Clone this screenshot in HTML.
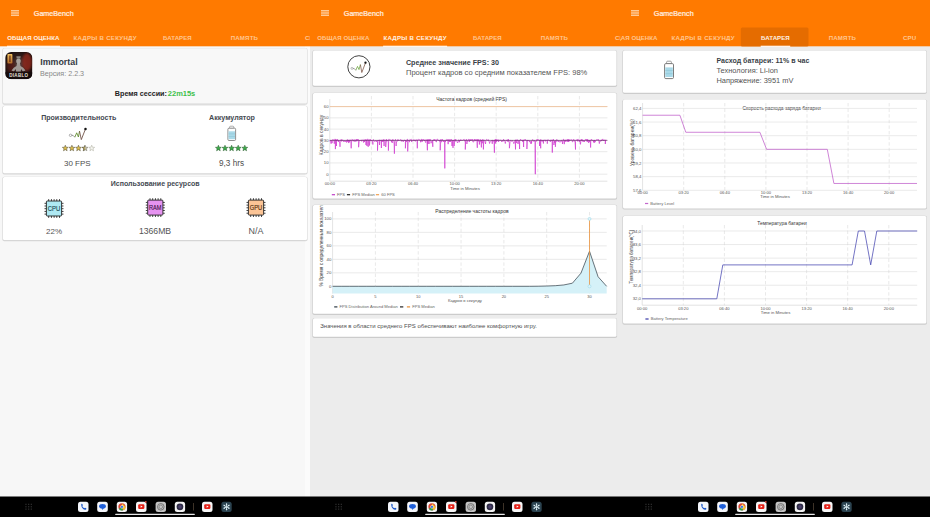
<!DOCTYPE html><html><head><meta charset="utf-8"><style>html,body{margin:0;padding:0;background:#ededed;overflow:hidden}</style></head><body><svg width="930" height="517" viewBox="0 0 930 517" font-family='"Liberation Sans", sans-serif' style="display:block">
<defs><filter id="sh" x="-5%" y="-20%" width="110%" height="140%"><feGaussianBlur stdDeviation="0.6"/></filter>
<clipPath id="clip0"><rect x="0" y="0" width="310" height="517"/></clipPath>
<clipPath id="clip310"><rect x="310" y="0" width="310" height="517"/></clipPath>
<clipPath id="clip620"><rect x="620" y="0" width="310" height="517"/></clipPath>
</defs>
<rect width="930" height="517" fill="#ececec"/>
<rect x="0" y="0" width="310" height="517" fill="#f7f7f7"/>
<rect x="305" y="46" width="5" height="451" fill="#fbfbfb"/>
<g clip-path="url(#clip0)">
<rect x="0" y="0" width="310" height="46.3" fill="#ff7a00"/>
<rect x="11" y="10.2" width="8" height="1.2" fill="#ffdcb8"/>
<rect x="11" y="12.4" width="8" height="1.2" fill="#ffdcb8"/>
<rect x="11" y="14.6" width="8" height="1.2" fill="#ffdcb8"/>
<text x="33.8" y="16.2" font-size="7.5" fill="#fff0e2" stroke="#fff0e2" stroke-width="0.22" textLength="39.9" lengthAdjust="spacingAndGlyphs">GameBench</text>
<text x="7.30" y="39.7" font-size="6.1" fill="#fff2e4" font-weight="bold" textLength="52.2" lengthAdjust="spacing">ОБЩАЯ ОЦЕНКА</text>
<rect x="7.0" y="45.7" width="53.0" height="1.3" fill="#fff5ec"/>
<text x="73.40" y="39.7" font-size="6.1" fill="#ffc690" font-weight="bold" textLength="63.2" lengthAdjust="spacing">КАДРЫ В СЕКУНДУ</text>
<text x="163.00" y="39.7" font-size="6.1" fill="#ffc690" font-weight="bold" textLength="28.7" lengthAdjust="spacing">БАТАРЕЯ</text>
<text x="230.70" y="39.7" font-size="6.1" fill="#ffc690" font-weight="bold" textLength="27.3" lengthAdjust="spacing">ПАМЯТЬ</text>
<text x="305.10" y="39.7" font-size="6.1" fill="#ffc690" font-weight="bold" textLength="13" lengthAdjust="spacing">CPU</text>
</g>
<rect x="2.4" y="48.099999999999994" width="305.2" height="56.6" rx="1.8" fill="#000" opacity="0.13" filter="url(#sh)"/>
<rect x="3" y="48.3" width="304" height="55.2" rx="1.5" fill="#f8f8f8"/>
<defs><radialGradient id="dg" cx="0.5" cy="0.45" r="0.65"><stop offset="0" stop-color="#5a4440"/><stop offset="0.5" stop-color="#2e1a18"/><stop offset="1" stop-color="#120a0a"/></radialGradient><linearGradient id="gb" x1="0" y1="0" x2="0" y2="1"><stop offset="0" stop-color="#f0c060"/><stop offset="1" stop-color="#b06a28"/></linearGradient><filter id="bl"><feGaussianBlur stdDeviation="1.2"/></filter></defs>
<clipPath id="dclip"><rect x="5.2" y="52" width="27.2" height="27.2" rx="6"/></clipPath>
<g clip-path="url(#dclip)">
<rect x="5.2" y="52" width="27.2" height="27.2" fill="url(#dg)"/>
<ellipse cx="27" cy="62" rx="5" ry="9" fill="#9a2a1e" opacity="0.75" filter="url(#bl)"/>
<ellipse cx="11" cy="66" rx="4" ry="6" fill="#5a1e18" opacity="0.7" filter="url(#bl)"/>
<rect x="7.4" y="54" width="5" height="9.5" rx="0.8" fill="url(#gb)"/>
<rect x="9.4" y="55.5" width="1.1" height="6.5" fill="#5a2010"/>
<path d="M16.3 56.2 h4.4 l-0.4 2.2 h-3.6z" fill="#8d8680"/>
<ellipse cx="18.5" cy="61" rx="2.3" ry="2.6" fill="#a8a29c"/>
<path d="M11.5 70.5 q2 -3.5 5 -4.5 l0.6 -3 h2.8 l0.6 3 q3 1 5 4.5 q-2 1.2 -3 0.6 l-1.4 -2 l-0.4 2.4 h-4.6 l-0.4 -2.4 l-1.4 2 q-1 0.6 -2.8 -0.6z" fill="#aaa49e" opacity="0.9"/>
<rect x="5.2" y="72" width="27.2" height="7.2" fill="#120a0a" opacity="0.6"/>
</g>
<text x="18.80" y="77.10" font-size="4.5" fill="#e6e0da" font-weight="bold" text-anchor="middle" letter-spacing="0.3">DIABLO</text>
<text x="40.3" y="64.8" font-size="9.4" fill="#353b45" font-weight="bold" textLength="37.3" lengthAdjust="spacingAndGlyphs">Immortal</text>
<text x="40.1" y="75.8" font-size="7.5" fill="#888" textLength="44" lengthAdjust="spacingAndGlyphs">Версия: 2.2.3</text>
<text x="114.80" y="95.70" font-size="7.19" fill="#1f1f1f" font-weight="bold" text-anchor="start" >Время сессии: </text>
<text x="167.8" y="95.8" font-size="7.5" fill="#3cc04a" font-weight="bold" textLength="27.5" lengthAdjust="spacingAndGlyphs">22m15s</text>
<rect x="2.4" y="105.8" width="305.2" height="68.70000000000002" rx="1.8" fill="#000" opacity="0.13" filter="url(#sh)"/>
<rect x="3" y="106" width="304" height="67.30000000000001" rx="1.5" fill="#fff"/>
<text x="78.70" y="119.90" font-size="7.05" fill="#454a52" font-weight="bold" text-anchor="middle" >Производительность</text>
<circle cx="70.5" cy="135.3" r="1.2" fill="#fff" stroke="#888" stroke-width="0.65"/>
<path d="M71.7 135.3 L73.1 135.4 L74.8 137.2" fill="none" stroke="#7a7a7a" stroke-width="0.8"/>
<path d="M74.8 137.2 L76.7 132.8 L78.4 137 L79.5 131.1" fill="none" stroke="#5f8a2a" stroke-width="0.85"/>
<path d="M79.5 131.1 L81.3 139.6 L85.5 128.9" fill="none" stroke="#6b4c40" stroke-width="0.85"/>
<circle cx="85.5" cy="128.9" r="1.25" fill="#111"/>
<polygon points="65.30,145.20 66.09,147.21 68.25,147.34 66.58,148.72 67.12,150.81 65.30,149.65 63.48,150.81 64.02,148.72 62.35,147.34 64.51,147.21" fill="#dcbd4a" stroke="#4f4a36" stroke-width="0.5"/>
<polygon points="71.90,145.20 72.69,147.21 74.85,147.34 73.18,148.72 73.72,150.81 71.90,149.65 70.08,150.81 70.62,148.72 68.95,147.34 71.11,147.21" fill="#dcbd4a" stroke="#4f4a36" stroke-width="0.5"/>
<polygon points="78.50,145.20 79.29,147.21 81.45,147.34 79.78,148.72 80.32,150.81 78.50,149.65 76.68,150.81 77.22,148.72 75.55,147.34 77.71,147.21" fill="#dcbd4a" stroke="#4f4a36" stroke-width="0.5"/>
<clipPath id="hc62"><rect x="81.89999999999999" y="144.8" width="3.2" height="7"/></clipPath>
<polygon points="85.10,145.20 85.89,147.21 88.05,147.34 86.38,148.72 86.92,150.81 85.10,149.65 83.28,150.81 83.82,148.72 82.15,147.34 84.31,147.21" fill="#c4c0a8" stroke="#77766a" stroke-width="0.5"/>
<polygon points="85.10,145.20 85.89,147.21 88.05,147.34 86.38,148.72 86.92,150.81 85.10,149.65 83.28,150.81 83.82,148.72 82.15,147.34 84.31,147.21" fill="#bfae68" stroke="#4f4a36" stroke-width="0.5" clip-path="url(#hc62)"/>
<polygon points="91.70,145.20 92.49,147.21 94.65,147.34 92.98,148.72 93.52,150.81 91.70,149.65 89.88,150.81 90.42,148.72 88.75,147.34 90.91,147.21" fill="#f4f4ee" stroke="#a9a89a" stroke-width="0.5"/>
<text x="77.30" y="165.60" font-size="8.0" fill="#4e4e4e" font-weight="normal" text-anchor="middle" >30 FPS</text>
<text x="232.00" y="119.90" font-size="7.13" fill="#454a52" font-weight="bold" text-anchor="middle" >Аккумулятор</text>
<rect x="229.6" y="126.2" width="4.2" height="2.3" rx="0.9" fill="#fff" stroke="#7a7a7a" stroke-width="0.6"/>
<rect x="227.9" y="128.2" width="7.7" height="12.3" rx="1.1" fill="#fff" stroke="#747474" stroke-width="0.8"/>
<rect x="228.5" y="131.3" width="6.5" height="7.9" fill="#a9d9e8"/>
<rect x="228.5" y="133.7" width="6.5" height="0.45" fill="#86c0d2"/><rect x="228.5" y="136.4" width="6.5" height="0.45" fill="#86c0d2"/>
<polygon points="218.40,145.20 219.19,147.21 221.35,147.34 219.68,148.72 220.22,150.81 218.40,149.65 216.58,150.81 217.12,148.72 215.45,147.34 217.61,147.21" fill="#3bab48" stroke="#2c5a31" stroke-width="0.5"/>
<polygon points="225.00,145.20 225.79,147.21 227.95,147.34 226.28,148.72 226.82,150.81 225.00,149.65 223.18,150.81 223.72,148.72 222.05,147.34 224.21,147.21" fill="#3bab48" stroke="#2c5a31" stroke-width="0.5"/>
<polygon points="231.60,145.20 232.39,147.21 234.55,147.34 232.88,148.72 233.42,150.81 231.60,149.65 229.78,150.81 230.32,148.72 228.65,147.34 230.81,147.21" fill="#3bab48" stroke="#2c5a31" stroke-width="0.5"/>
<polygon points="238.20,145.20 238.99,147.21 241.15,147.34 239.48,148.72 240.02,150.81 238.20,149.65 236.38,150.81 236.92,148.72 235.25,147.34 237.41,147.21" fill="#3bab48" stroke="#2c5a31" stroke-width="0.5"/>
<polygon points="244.80,145.20 245.59,147.21 247.75,147.34 246.08,148.72 246.62,150.81 244.80,149.65 242.98,150.81 243.52,148.72 241.85,147.34 244.01,147.21" fill="#3bab48" stroke="#2c5a31" stroke-width="0.5"/>
<text x="231.50" y="165.60" font-size="8.18" fill="#4e4e4e" font-weight="normal" text-anchor="middle" >9,3 hrs</text>
<rect x="2.4" y="176.8" width="305.2" height="64.4" rx="1.8" fill="#000" opacity="0.13" filter="url(#sh)"/>
<rect x="3" y="177" width="304" height="63" rx="1.5" fill="#fff"/>
<text x="155.20" y="185.70" font-size="7.04" fill="#454a52" font-weight="bold" text-anchor="middle" >Использование ресурсов</text>
<rect x="48.24999999999999" y="199.1" width="0.9" height="1.9" fill="#333"/>
<rect x="48.24999999999999" y="216.0" width="0.9" height="1.9" fill="#333"/>
<rect x="44.5" y="202.85000000000002" width="1.9" height="0.9" fill="#333"/>
<rect x="61.599999999999994" y="202.85000000000002" width="1.9" height="0.9" fill="#333"/>
<rect x="50.949999999999996" y="199.1" width="0.9" height="1.9" fill="#333"/>
<rect x="50.949999999999996" y="216.0" width="0.9" height="1.9" fill="#333"/>
<rect x="44.5" y="205.55" width="1.9" height="0.9" fill="#333"/>
<rect x="61.599999999999994" y="205.55" width="1.9" height="0.9" fill="#333"/>
<rect x="53.65" y="199.1" width="0.9" height="1.9" fill="#333"/>
<rect x="53.65" y="216.0" width="0.9" height="1.9" fill="#333"/>
<rect x="44.5" y="208.25" width="1.9" height="0.9" fill="#333"/>
<rect x="61.599999999999994" y="208.25" width="1.9" height="0.9" fill="#333"/>
<rect x="56.349999999999994" y="199.1" width="0.9" height="1.9" fill="#333"/>
<rect x="56.349999999999994" y="216.0" width="0.9" height="1.9" fill="#333"/>
<rect x="44.5" y="210.95000000000002" width="1.9" height="0.9" fill="#333"/>
<rect x="61.599999999999994" y="210.95000000000002" width="1.9" height="0.9" fill="#333"/>
<rect x="59.05" y="199.1" width="0.9" height="1.9" fill="#333"/>
<rect x="59.05" y="216.0" width="0.9" height="1.9" fill="#333"/>
<rect x="44.5" y="213.65" width="1.9" height="0.9" fill="#333"/>
<rect x="61.599999999999994" y="213.65" width="1.9" height="0.9" fill="#333"/>
<rect x="46.4" y="201.0" width="15.2" height="15" rx="0.8" fill="#aee9f3" stroke="#222" stroke-width="0.9"/>
<text x="54.00" y="211.00" font-size="6.9" fill="#14434a" stroke="#14434a" stroke-width="0.12" text-anchor="middle" textLength="12.4" lengthAdjust="spacingAndGlyphs">CPU</text>
<rect x="149.55000000000004" y="198.2" width="0.9" height="1.9" fill="#333"/>
<rect x="149.55000000000004" y="215.1" width="0.9" height="1.9" fill="#333"/>
<rect x="145.8" y="201.95000000000002" width="1.9" height="0.9" fill="#333"/>
<rect x="162.9" y="201.95000000000002" width="1.9" height="0.9" fill="#333"/>
<rect x="152.25000000000003" y="198.2" width="0.9" height="1.9" fill="#333"/>
<rect x="152.25000000000003" y="215.1" width="0.9" height="1.9" fill="#333"/>
<rect x="145.8" y="204.65" width="1.9" height="0.9" fill="#333"/>
<rect x="162.9" y="204.65" width="1.9" height="0.9" fill="#333"/>
<rect x="154.95000000000002" y="198.2" width="0.9" height="1.9" fill="#333"/>
<rect x="154.95000000000002" y="215.1" width="0.9" height="1.9" fill="#333"/>
<rect x="145.8" y="207.35" width="1.9" height="0.9" fill="#333"/>
<rect x="162.9" y="207.35" width="1.9" height="0.9" fill="#333"/>
<rect x="157.65000000000003" y="198.2" width="0.9" height="1.9" fill="#333"/>
<rect x="157.65000000000003" y="215.1" width="0.9" height="1.9" fill="#333"/>
<rect x="145.8" y="210.05" width="1.9" height="0.9" fill="#333"/>
<rect x="162.9" y="210.05" width="1.9" height="0.9" fill="#333"/>
<rect x="160.35000000000002" y="198.2" width="0.9" height="1.9" fill="#333"/>
<rect x="160.35000000000002" y="215.1" width="0.9" height="1.9" fill="#333"/>
<rect x="145.8" y="212.75" width="1.9" height="0.9" fill="#333"/>
<rect x="162.9" y="212.75" width="1.9" height="0.9" fill="#333"/>
<rect x="147.70000000000002" y="200.1" width="15.2" height="15" rx="0.8" fill="#e693f0" stroke="#222" stroke-width="0.9"/>
<text x="155.30" y="210.10" font-size="6.9" fill="#3a1040" stroke="#3a1040" stroke-width="0.12" text-anchor="middle" textLength="12.4" lengthAdjust="spacingAndGlyphs">RAM</text>
<rect x="250.25000000000003" y="198.2" width="0.9" height="1.9" fill="#333"/>
<rect x="250.25000000000003" y="215.1" width="0.9" height="1.9" fill="#333"/>
<rect x="246.5" y="201.95000000000002" width="1.9" height="0.9" fill="#333"/>
<rect x="263.6" y="201.95000000000002" width="1.9" height="0.9" fill="#333"/>
<rect x="252.95000000000002" y="198.2" width="0.9" height="1.9" fill="#333"/>
<rect x="252.95000000000002" y="215.1" width="0.9" height="1.9" fill="#333"/>
<rect x="246.5" y="204.65" width="1.9" height="0.9" fill="#333"/>
<rect x="263.6" y="204.65" width="1.9" height="0.9" fill="#333"/>
<rect x="255.65000000000003" y="198.2" width="0.9" height="1.9" fill="#333"/>
<rect x="255.65000000000003" y="215.1" width="0.9" height="1.9" fill="#333"/>
<rect x="246.5" y="207.35" width="1.9" height="0.9" fill="#333"/>
<rect x="263.6" y="207.35" width="1.9" height="0.9" fill="#333"/>
<rect x="258.35" y="198.2" width="0.9" height="1.9" fill="#333"/>
<rect x="258.35" y="215.1" width="0.9" height="1.9" fill="#333"/>
<rect x="246.5" y="210.05" width="1.9" height="0.9" fill="#333"/>
<rect x="263.6" y="210.05" width="1.9" height="0.9" fill="#333"/>
<rect x="261.05" y="198.2" width="0.9" height="1.9" fill="#333"/>
<rect x="261.05" y="215.1" width="0.9" height="1.9" fill="#333"/>
<rect x="246.5" y="212.75" width="1.9" height="0.9" fill="#333"/>
<rect x="263.6" y="212.75" width="1.9" height="0.9" fill="#333"/>
<rect x="248.4" y="200.1" width="15.2" height="15" rx="0.8" fill="#fbc496" stroke="#222" stroke-width="0.9"/>
<text x="256.00" y="210.10" font-size="6.9" fill="#4a2808" stroke="#4a2808" stroke-width="0.12" text-anchor="middle" textLength="12.4" lengthAdjust="spacingAndGlyphs">GPU</text>
<text x="54.00" y="233.80" font-size="8.0" fill="#555" font-weight="normal" text-anchor="middle" >22%</text>
<text x="155.00" y="233.60" font-size="8.67" fill="#555" font-weight="normal" text-anchor="middle" >1366MB</text>
<text x="256.00" y="233.60" font-size="8.94" fill="#555" font-weight="normal" text-anchor="middle" >N/A</text>
<rect x="0" y="496.5" width="310" height="20.5" fill="#000"/>
<rect x="25.3" y="503.7" width="1.3" height="1.3" fill="#2a2a2a"/>
<rect x="28.0" y="503.7" width="1.3" height="1.3" fill="#2a2a2a"/>
<rect x="30.700000000000003" y="503.7" width="1.3" height="1.3" fill="#2a2a2a"/>
<rect x="25.3" y="506.09999999999997" width="1.3" height="1.3" fill="#2a2a2a"/>
<rect x="28.0" y="506.09999999999997" width="1.3" height="1.3" fill="#2a2a2a"/>
<rect x="30.700000000000003" y="506.09999999999997" width="1.3" height="1.3" fill="#2a2a2a"/>
<rect x="25.3" y="508.5" width="1.3" height="1.3" fill="#2a2a2a"/>
<rect x="28.0" y="508.5" width="1.3" height="1.3" fill="#2a2a2a"/>
<rect x="30.700000000000003" y="508.5" width="1.3" height="1.3" fill="#2a2a2a"/>
<rect x="78" y="501.7" width="10.5" height="10.3" rx="2.5" fill="#f4f6fb"/>
<path d="M81.3 504 q0.8 -0.6 1.2 0.3 l0.3 1 q0 0.6 -0.6 0.8 q0.6 1.6 2 2.2 q0.3 -0.6 0.9 -0.5 l1 0.4 q0.6 0.5 0 1.2 q-1.2 1 -3 -0.3 q-2.2 -1.8 -1.8 -5.1z" fill="#1a56c8"/>
<rect x="97.2" y="501.7" width="10.6" height="10.3" rx="2.5" fill="#f4f6fb"/>
<ellipse cx="102.5" cy="506.3" rx="3.4" ry="2.4" fill="#1f5fd8"/>
<path d="M101.8 508.2 l0.8 1.8 l1.2 -2z" fill="#1f5fd8"/>
<rect x="116.8" y="501.7" width="10.3" height="10.3" rx="2.5" fill="#f4f4f4"/>
<circle cx="121.95" cy="506.85" r="3.6" fill="#dd4433"/>
<path d="M121.95 506.85 L118.85000000000001 508.65000000000003 A3.6 3.6 0 0 0 123.15 510.25z" fill="#2ea353"/>
<path d="M121.95 506.85 L123.15 510.25 A3.6 3.6 0 0 0 125.55 506.65000000000003 L121.95 503.25z" fill="#f5c12e"/>
<circle cx="121.95" cy="506.85" r="1.6" fill="#fff"/><circle cx="121.95" cy="506.85" r="1.2" fill="#3b78e7"/>
<rect x="136" y="501.7" width="10.5" height="10.3" rx="2.5" fill="#f6f6f6"/>
<rect x="138.2" y="504.3" width="6.2" height="4.6" rx="1.2" fill="#e62117"/>
<path d="M140.6 505.5 l2 1.1 l-2 1.1z" fill="#fff"/>
<circle cx="145.8" cy="501.9" r="0.9" fill="#e94a3f"/>
<rect x="155.6" y="501.7" width="10.4" height="10.3" rx="2.5" fill="#c4c4c4"/>
<circle cx="160.79999999999998" cy="506.85" r="3.3" fill="none" stroke="#555" stroke-width="0.7"/>
<circle cx="160.79999999999998" cy="506.85" r="1.8" fill="none" stroke="#666" stroke-width="0.6"/>
<rect x="174.8" y="501.7" width="10.3" height="10.3" rx="2.5" fill="#f2f2f2"/>
<circle cx="179.95000000000002" cy="506.85" r="3.4" fill="#2c2a44"/>
<circle cx="179.95000000000002" cy="506.85" r="1.8" fill="#4a3f6a"/>
<rect x="202" y="501.7" width="10.5" height="10.3" rx="2.5" fill="#f6f6f6"/>
<rect x="204.2" y="504.3" width="6.2" height="4.6" rx="1.2" fill="#e62117"/>
<path d="M206.6 505.5 l2 1.1 l-2 1.1z" fill="#fff"/>
<rect x="221.4" y="501.7" width="10.3" height="10.3" rx="2.5" fill="#2b4350"/>
<line x1="226.55" y1="506.85" x2="229.49" y2="508.55" stroke="#dff0f6" stroke-width="0.85"/>
<circle cx="228.76" cy="508.12" r="0.75" fill="#dff0f6"/>
<line x1="226.55" y1="506.85" x2="226.55" y2="510.25" stroke="#dff0f6" stroke-width="0.85"/>
<circle cx="226.55" cy="509.40" r="0.75" fill="#dff0f6"/>
<line x1="226.55" y1="506.85" x2="223.61" y2="508.55" stroke="#dff0f6" stroke-width="0.85"/>
<circle cx="224.34" cy="508.12" r="0.75" fill="#dff0f6"/>
<line x1="226.55" y1="506.85" x2="223.61" y2="505.15" stroke="#dff0f6" stroke-width="0.85"/>
<circle cx="224.34" cy="505.58" r="0.75" fill="#dff0f6"/>
<line x1="226.55" y1="506.85" x2="226.55" y2="503.45" stroke="#dff0f6" stroke-width="0.85"/>
<circle cx="226.55" cy="504.30" r="0.75" fill="#dff0f6"/>
<line x1="226.55" y1="506.85" x2="229.49" y2="505.15" stroke="#dff0f6" stroke-width="0.85"/>
<circle cx="228.76" cy="505.58" r="0.75" fill="#dff0f6"/>
<rect x="193" y="503" width="0.7" height="7.5" fill="#5a4a3a"/>
<rect x="115.2" y="513.8" width="79.6" height="1.1" rx="0.5" fill="#e8e8e8"/>
<g clip-path="url(#clip310)">
<rect x="310" y="0" width="310" height="46.3" fill="#ff7a00"/>
<rect x="321" y="10.2" width="8" height="1.2" fill="#ffdcb8"/>
<rect x="321" y="12.4" width="8" height="1.2" fill="#ffdcb8"/>
<rect x="321" y="14.6" width="8" height="1.2" fill="#ffdcb8"/>
<text x="343.8" y="16.2" font-size="7.5" fill="#fff0e2" stroke="#fff0e2" stroke-width="0.22" textLength="39.9" lengthAdjust="spacingAndGlyphs">GameBench</text>
<text x="317.30" y="39.7" font-size="6.1" fill="#ffc690" font-weight="bold" textLength="52.2" lengthAdjust="spacing">ОБЩАЯ ОЦЕНКА</text>
<text x="383.40" y="39.7" font-size="6.1" fill="#fff2e4" font-weight="bold" textLength="63.2" lengthAdjust="spacing">КАДРЫ В СЕКУНДУ</text>
<rect x="383.09999999999997" y="45.7" width="64.0" height="1.3" fill="#fff5ec"/>
<text x="473.00" y="39.7" font-size="6.1" fill="#ffc690" font-weight="bold" textLength="28.7" lengthAdjust="spacing">БАТАРЕЯ</text>
<text x="540.70" y="39.7" font-size="6.1" fill="#ffc690" font-weight="bold" textLength="27.3" lengthAdjust="spacing">ПАМЯТЬ</text>
<text x="615.10" y="39.7" font-size="6.1" fill="#ffc690" font-weight="bold" textLength="13" lengthAdjust="spacing">CPU</text>
</g>
<rect x="312.4" y="50.3" width="304.7" height="36.699999999999996" rx="1.8" fill="#000" opacity="0.13" filter="url(#sh)"/>
<rect x="313" y="50.5" width="303.5" height="35.3" rx="1.5" fill="#fff"/>
<circle cx="358.9" cy="66.8" r="11.1" fill="#fff" stroke="#2e2e2e" stroke-width="0.9"/>
<circle cx="352" cy="68.4" r="1" fill="#fff" stroke="#888" stroke-width="0.55"/>
<path d="M353 68.5 L354.3 68.6 L355.8 70.3" fill="none" stroke="#7a7a7a" stroke-width="0.7"/>
<path d="M355.8 70.3 L357.5 66.4 L359 69.6 L360.4 64.6" fill="none" stroke="#6aa23a" stroke-width="0.75"/>
<path d="M360.4 64.6 L361.8 72.5 L365.5 62.8" fill="none" stroke="#7a5040" stroke-width="0.75"/>
<circle cx="365.5" cy="62.7" r="1.15" fill="#111"/>
<text x="405.90" y="65.00" font-size="7.16" fill="#3a3f47" font-weight="bold" text-anchor="start" >Среднее значение FPS: 30</text>
<text x="406.00" y="75.10" font-size="7.55" fill="#555" font-weight="normal" text-anchor="start" >Процент кадров со средним показателем FPS: 98%</text>
<rect x="312.4" y="92.8" width="304.7" height="106.9" rx="1.8" fill="#000" opacity="0.13" filter="url(#sh)"/>
<rect x="313" y="93" width="303.5" height="105.5" rx="1.5" fill="#fff"/>
<text x="471.50" y="100.90" font-size="4.98" fill="#333" font-weight="normal" text-anchor="middle" >Частота кадров (средний FPS)</text>
<line x1="329.8" y1="174.20" x2="607.4" y2="174.20" stroke="#dcdcdc" stroke-width="0.6"/>
<text x="328.60" y="175.70" font-size="4.3" fill="#555" font-weight="normal" text-anchor="end" >0</text>
<line x1="329.8" y1="162.93" x2="607.4" y2="162.93" stroke="#dcdcdc" stroke-width="0.6"/>
<text x="328.60" y="164.43" font-size="4.3" fill="#555" font-weight="normal" text-anchor="end" >10</text>
<line x1="329.8" y1="151.67" x2="607.4" y2="151.67" stroke="#dcdcdc" stroke-width="0.6"/>
<text x="328.60" y="153.17" font-size="4.3" fill="#555" font-weight="normal" text-anchor="end" >20</text>
<line x1="329.8" y1="140.40" x2="607.4" y2="140.40" stroke="#dcdcdc" stroke-width="0.6"/>
<text x="328.60" y="141.90" font-size="4.3" fill="#555" font-weight="normal" text-anchor="end" >30</text>
<line x1="329.8" y1="129.13" x2="607.4" y2="129.13" stroke="#dcdcdc" stroke-width="0.6"/>
<text x="328.60" y="130.63" font-size="4.3" fill="#555" font-weight="normal" text-anchor="end" >40</text>
<line x1="329.8" y1="117.86" x2="607.4" y2="117.86" stroke="#dcdcdc" stroke-width="0.6"/>
<text x="328.60" y="119.36" font-size="4.3" fill="#555" font-weight="normal" text-anchor="end" >50</text>
<line x1="329.8" y1="106.60" x2="607.4" y2="106.60" stroke="#dcdcdc" stroke-width="0.6"/>
<text x="328.60" y="108.10" font-size="4.3" fill="#555" font-weight="normal" text-anchor="end" >60</text>
<line x1="371.40" y1="96" x2="371.40" y2="181.2" stroke="#d2d2d2" stroke-width="0.5" stroke-dasharray="3.4 2.2"/>
<line x1="413.00" y1="96" x2="413.00" y2="181.2" stroke="#d2d2d2" stroke-width="0.5" stroke-dasharray="3.4 2.2"/>
<line x1="454.60" y1="96" x2="454.60" y2="181.2" stroke="#d2d2d2" stroke-width="0.5" stroke-dasharray="3.4 2.2"/>
<line x1="496.20" y1="96" x2="496.20" y2="181.2" stroke="#d2d2d2" stroke-width="0.5" stroke-dasharray="3.4 2.2"/>
<line x1="537.80" y1="96" x2="537.80" y2="181.2" stroke="#d2d2d2" stroke-width="0.5" stroke-dasharray="3.4 2.2"/>
<line x1="579.40" y1="96" x2="579.40" y2="181.2" stroke="#d2d2d2" stroke-width="0.5" stroke-dasharray="3.4 2.2"/>
<line x1="329.8" y1="99" x2="329.8" y2="181.2" stroke="#d0d0d0" stroke-width="0.6"/>
<line x1="329.8" y1="181.20" x2="607.4" y2="181.20" stroke="#d0d0d0" stroke-width="0.6"/>
<text x="329.80" y="184.90" font-size="4.1" fill="#555" font-weight="normal" text-anchor="middle" >00:00</text>
<text x="371.40" y="184.90" font-size="4.1" fill="#555" font-weight="normal" text-anchor="middle" >03:20</text>
<text x="413.00" y="184.90" font-size="4.1" fill="#555" font-weight="normal" text-anchor="middle" >06:40</text>
<text x="454.60" y="184.90" font-size="4.1" fill="#555" font-weight="normal" text-anchor="middle" >10:00</text>
<text x="496.20" y="184.90" font-size="4.1" fill="#555" font-weight="normal" text-anchor="middle" >13:20</text>
<text x="537.80" y="184.90" font-size="4.1" fill="#555" font-weight="normal" text-anchor="middle" >16:40</text>
<text x="579.40" y="184.90" font-size="4.1" fill="#555" font-weight="normal" text-anchor="middle" >20:00</text>
<text x="465.00" y="189.60" font-size="4.22" fill="#555" font-weight="normal" text-anchor="middle" >Time in Minutes</text>
<text x="0" y="0" transform="translate(322.90,135.00) rotate(-90)" font-size="5.0" fill="#444" text-anchor="middle">Кадров в секунду</text>
<line x1="329.8" y1="106.60" x2="607.4" y2="106.60" stroke="#f2ad74" stroke-width="0.6"/>
<path d="M329.80 141.41 L330.25 139.95 L330.70 140.40 L331.10 143.70 L331.15 140.40 L331.60 140.40 L332.05 143.12 L332.50 140.40 L332.95 139.27 L333.40 140.40 L333.85 140.40 L334.30 143.72 L334.75 139.27 L335.20 139.50 L335.40 149.10 L335.65 139.27 L336.10 139.50 L336.50 146.00 L336.55 139.84 L337.00 140.96 L337.45 139.27 L337.90 140.40 L338.35 141.98 L338.80 139.95 L339.25 141.98 L339.70 141.98 L340.00 146.80 L340.15 140.96 L340.60 140.96 L341.05 139.50 L341.50 141.41 L341.95 139.50 L342.40 140.40 L342.85 139.95 L343.30 141.41 L343.75 141.98 L344.20 140.40 L344.65 141.41 L345.10 141.41 L345.55 141.98 L346.00 140.40 L346.45 141.98 L346.60 142.50 L346.90 140.40 L347.35 139.50 L347.80 141.98 L348.25 139.95 L348.70 143.04 L349.15 139.84 L349.60 142.18 L350.05 139.84 L350.50 139.95 L350.95 141.98 L351.20 148.30 L351.40 141.98 L351.85 139.50 L352.30 139.95 L352.75 139.50 L353.20 141.41 L353.65 139.95 L354.10 139.84 L354.55 139.84 L355.00 142.00 L355.45 139.84 L355.90 140.40 L356.35 139.27 L356.80 141.41 L357.25 139.27 L357.70 140.40 L358.15 139.27 L358.60 139.95 L358.60 147.20 L359.05 141.98 L359.50 140.40 L359.95 140.96 L360.40 140.40 L360.85 140.40 L361.30 139.84 L361.75 141.41 L362.20 140.40 L362.65 139.95 L363.10 139.50 L363.55 141.41 L363.60 142.50 L364.00 140.40 L364.45 141.98 L364.90 139.50 L365.35 140.40 L365.80 139.50 L366.00 145.00 L366.25 139.84 L366.70 140.96 L367.00 146.00 L367.15 139.27 L367.60 139.27 L368.05 139.27 L368.20 146.80 L368.50 140.40 L368.95 139.50 L369.40 139.84 L369.50 145.50 L369.85 140.96 L370.30 139.27 L370.75 140.96 L371.20 140.96 L371.65 139.95 L372.10 140.96 L372.55 141.98 L372.90 144.50 L373.00 140.40 L373.45 139.50 L373.90 140.96 L374.35 141.41 L374.80 141.41 L375.25 141.41 L375.70 140.40 L376.15 140.96 L376.60 141.98 L377.05 140.40 L377.50 141.41 L377.50 150.60 L377.95 140.40 L378.40 140.40 L378.85 140.96 L379.30 139.84 L379.50 145.00 L379.75 141.41 L380.20 139.95 L380.65 140.40 L381.10 139.84 L381.40 148.00 L381.55 140.40 L382.00 141.98 L382.45 139.84 L382.90 141.98 L383.35 141.41 L383.80 139.27 L384.10 146.00 L384.25 140.40 L384.70 140.40 L385.15 139.84 L385.60 140.96 L385.70 147.00 L386.05 143.74 L386.50 139.27 L386.95 141.41 L387.40 139.95 L387.85 140.40 L388.30 141.41 L388.40 150.60 L388.75 139.27 L389.20 139.27 L389.65 139.84 L390.10 140.40 L390.55 139.84 L391.00 139.84 L391.45 141.98 L391.90 140.40 L392.20 143.00 L392.35 141.41 L392.80 139.27 L393.25 140.40 L393.70 140.40 L394.15 144.07 L394.40 153.70 L394.60 141.98 L395.05 140.40 L395.50 139.27 L395.95 140.96 L396.10 146.00 L396.40 141.98 L396.85 141.98 L397.30 140.96 L397.75 139.50 L398.20 140.96 L398.65 139.84 L399.10 139.95 L399.55 140.40 L400.00 139.95 L400.45 139.50 L400.90 139.84 L401.35 141.41 L401.80 139.84 L402.25 140.96 L402.70 140.40 L403.15 141.98 L403.60 140.96 L404.05 139.95 L404.50 139.95 L404.95 140.96 L405.40 140.40 L405.40 148.30 L405.85 140.40 L406.30 141.98 L406.75 140.40 L407.20 139.27 L407.65 139.27 L407.70 151.40 L408.10 140.40 L408.55 140.96 L409.00 140.40 L409.45 142.15 L409.90 139.50 L410.35 139.95 L410.80 139.50 L411.25 139.27 L411.70 141.98 L412.15 140.40 L412.60 139.84 L413.05 140.40 L413.50 140.40 L413.95 139.50 L414.40 140.96 L414.85 140.40 L415.30 141.41 L415.75 139.95 L416.20 139.50 L416.65 140.40 L417.10 140.96 L417.30 148.30 L417.55 139.84 L418.00 139.84 L418.45 139.50 L418.90 139.27 L419.35 139.50 L419.80 139.84 L420.25 140.40 L420.70 142.28 L421.15 139.27 L421.60 139.27 L422.05 141.98 L422.50 139.95 L422.95 139.27 L423.40 139.95 L423.85 139.50 L424.30 140.96 L424.75 139.84 L425.20 141.41 L425.65 142.58 L426.10 139.50 L426.55 140.40 L427.00 139.95 L427.40 150.30 L427.45 139.50 L427.90 143.82 L428.35 139.50 L428.80 139.50 L429.00 144.00 L429.25 141.41 L429.70 139.27 L430.15 140.40 L430.60 139.50 L431.05 143.27 L431.50 141.98 L431.95 140.96 L432.40 140.40 L432.80 146.80 L432.85 140.40 L433.30 140.40 L433.75 139.50 L434.20 140.96 L434.65 139.27 L435.10 139.84 L435.55 139.95 L436.00 141.98 L436.45 141.99 L436.90 139.27 L437.35 139.27 L437.80 139.27 L438.25 140.40 L438.70 140.96 L439.15 140.40 L439.60 141.41 L440.05 139.95 L440.20 150.30 L440.50 144.29 L440.95 139.27 L441.40 141.98 L441.85 141.98 L442.30 139.27 L442.75 140.40 L443.20 140.40 L443.65 141.98 L444.10 140.40 L444.55 140.96 L444.80 168.40 L445.00 140.96 L445.45 141.98 L445.90 139.95 L446.35 139.50 L446.80 140.96 L447.25 139.84 L447.70 139.50 L448.15 144.17 L448.60 139.50 L449.05 140.40 L449.50 141.98 L449.95 139.27 L450.40 141.98 L450.85 140.40 L451.30 139.27 L451.75 140.40 L452.00 146.00 L452.20 140.40 L452.65 140.40 L453.00 147.90 L453.10 141.98 L453.55 139.95 L454.00 140.96 L454.20 146.00 L454.45 140.40 L454.90 139.27 L455.35 141.41 L455.80 139.27 L456.25 140.40 L456.70 140.96 L457.15 141.98 L457.60 142.96 L458.05 141.98 L458.50 139.84 L458.95 139.95 L459.40 142.23 L459.85 139.95 L460.30 140.96 L460.75 139.50 L461.20 140.40 L461.65 140.40 L462.10 139.95 L462.55 140.40 L463.00 140.40 L463.45 139.50 L463.90 139.84 L464.35 139.50 L464.80 141.41 L465.25 141.41 L465.30 149.50 L465.70 139.95 L466.15 139.95 L466.60 139.27 L466.90 144.00 L467.05 142.28 L467.50 141.98 L467.95 139.84 L468.40 139.50 L468.85 139.27 L469.30 141.98 L469.75 139.50 L470.20 139.50 L470.65 140.96 L471.10 139.27 L471.55 140.40 L472.00 139.84 L472.45 139.27 L472.90 141.98 L473.35 141.98 L473.80 141.98 L474.25 139.27 L474.70 140.40 L475.15 139.27 L475.60 140.96 L476.05 140.96 L476.50 139.95 L476.95 139.27 L477.30 147.80 L477.40 139.50 L477.85 140.40 L478.30 141.41 L478.75 139.27 L479.20 140.96 L479.40 144.50 L479.65 140.96 L480.10 141.98 L480.55 139.50 L481.00 140.40 L481.40 147.40 L481.45 139.95 L481.90 141.98 L482.35 143.24 L482.80 139.27 L483.25 141.98 L483.40 149.40 L483.70 140.40 L484.15 139.84 L484.60 140.40 L485.05 141.98 L485.50 143.99 L485.95 140.40 L486.40 139.50 L486.85 139.50 L487.30 139.95 L487.75 140.40 L488.20 139.50 L488.65 140.96 L489.10 140.96 L489.55 143.49 L490.00 141.98 L490.45 141.41 L490.90 140.96 L491.35 140.96 L491.80 140.40 L492.25 143.80 L492.70 139.95 L493.15 140.96 L493.60 141.41 L494.05 140.40 L494.40 152.70 L494.50 139.95 L494.95 139.95 L495.40 139.50 L495.60 143.50 L495.85 139.27 L496.30 141.98 L496.75 139.50 L497.20 140.96 L497.65 140.96 L498.10 139.50 L498.55 141.98 L499.00 140.96 L499.45 140.40 L499.90 139.84 L500.35 140.40 L500.80 139.84 L501.25 140.40 L501.70 141.98 L502.15 141.41 L502.60 140.40 L503.05 141.41 L503.50 139.27 L503.95 140.40 L504.40 139.95 L504.85 141.41 L505.30 143.55 L505.75 141.41 L506.20 140.40 L506.65 140.96 L507.10 139.50 L507.55 139.95 L508.00 141.98 L508.45 139.27 L508.90 140.96 L509.35 143.19 L509.40 148.20 L509.80 144.24 L510.25 140.40 L510.70 140.40 L511.15 140.40 L511.60 141.41 L512.05 141.41 L512.50 140.40 L512.95 141.41 L513.40 142.21 L513.85 143.68 L514.30 141.98 L514.75 141.98 L515.20 139.95 L515.50 149.40 L515.65 139.95 L516.10 139.84 L516.55 141.72 L516.70 143.00 L517.00 139.50 L517.45 139.84 L517.90 141.41 L518.00 144.00 L518.35 141.98 L518.80 140.40 L519.25 139.95 L519.60 149.00 L519.70 140.96 L520.15 140.40 L520.60 139.27 L521.05 139.95 L521.50 140.40 L521.95 140.40 L522.40 139.95 L522.85 141.98 L523.30 139.84 L523.60 147.00 L523.75 140.96 L524.20 140.40 L524.65 139.50 L525.10 139.50 L525.55 139.50 L526.00 140.96 L526.45 140.96 L526.90 140.96 L526.90 149.00 L527.35 139.95 L527.80 140.96 L528.25 140.96 L528.70 140.40 L529.15 140.40 L529.60 141.98 L530.05 140.96 L530.50 143.52 L530.95 142.65 L531.40 140.96 L531.40 143.70 L531.85 141.41 L532.30 139.84 L532.75 139.50 L533.20 140.40 L533.65 141.41 L534.10 141.41 L534.55 140.40 L535.00 142.28 L535.30 174.20 L535.45 140.96 L535.90 141.41 L536.35 141.41 L536.80 139.50 L537.25 140.40 L537.70 139.27 L538.15 139.95 L538.60 139.95 L539.05 139.84 L539.50 140.40 L539.50 146.00 L539.95 139.95 L540.40 139.95 L540.70 148.30 L540.85 139.50 L541.30 140.40 L541.75 141.41 L542.20 140.40 L542.65 141.41 L543.10 139.95 L543.40 143.50 L543.55 140.96 L544.00 139.95 L544.45 139.95 L544.90 140.40 L545.35 141.41 L545.80 139.84 L546.25 140.40 L546.70 139.95 L547.15 141.41 L547.30 143.70 L547.60 139.84 L548.05 139.50 L548.50 139.84 L548.95 140.40 L549.40 140.96 L549.85 140.40 L550.30 141.98 L550.75 139.95 L551.20 139.84 L551.65 140.96 L552.10 140.96 L552.30 152.60 L552.55 139.84 L553.00 140.40 L553.45 139.27 L553.90 141.41 L553.90 145.00 L554.35 140.96 L554.80 142.76 L555.25 140.40 L555.40 146.80 L555.70 141.41 L556.15 141.98 L556.60 139.50 L557.05 139.50 L557.50 139.95 L557.95 141.41 L558.40 141.98 L558.50 141.50 L558.85 140.40 L559.30 141.98 L559.75 141.98 L560.20 141.98 L560.65 141.98 L561.10 140.40 L561.55 139.95 L562.00 141.98 L562.40 141.50 L562.45 143.98 L562.90 141.41 L563.35 139.27 L563.80 139.27 L564.25 144.16 L564.70 140.40 L565.15 141.98 L565.60 139.84 L566.05 140.96 L566.50 141.41 L566.95 139.50 L567.40 139.50 L567.85 141.98 L568.30 139.27 L568.75 141.98 L569.20 139.50 L569.65 140.96 L570.10 140.40 L570.55 139.95 L571.00 139.50 L571.45 139.95 L571.90 139.50 L572.35 141.92 L572.80 141.98 L573.25 140.40 L573.70 139.27 L574.15 139.95 L574.60 141.41 L575.05 141.41 L575.50 149.50 L575.50 141.41 L575.95 140.40 L576.40 139.84 L576.85 140.40 L577.30 139.27 L577.75 141.41 L578.20 140.40 L578.65 139.50 L579.10 139.95 L579.40 142.00 L579.55 141.41 L580.00 139.84 L580.45 144.34 L580.90 141.41 L581.35 139.27 L581.80 140.96 L582.25 139.50 L582.70 140.96 L583.15 141.98 L583.60 140.40 L584.05 140.96 L584.50 141.98 L584.95 139.84 L585.40 139.50 L585.85 139.50 L586.30 140.40 L586.75 139.27 L587.20 141.98 L587.65 139.27 L588.10 140.96 L588.55 142.85 L589.00 139.95 L589.45 142.15 L589.90 140.40 L590.35 140.96 L590.60 147.50 L590.80 140.96 L591.25 139.27 L591.70 139.95 L592.15 139.84 L592.60 140.40 L593.05 140.40 L593.50 141.98 L593.95 140.40 L594.10 143.00 L594.40 139.95 L594.85 141.98 L595.30 141.98 L595.75 140.40 L596.20 140.40 L596.65 139.50 L597.10 139.50 L597.55 139.95 L598.00 139.27 L598.45 139.50 L598.90 140.96 L599.35 143.61 L599.80 140.96 L600.25 140.96 L600.70 141.41 L601.15 139.95 L601.60 140.96 L602.05 139.27 L602.50 139.27 L602.95 140.40 L603.40 140.96 L603.85 139.50 L604.30 139.95 L604.75 140.40 L605.20 139.84 L605.30 144.00 L605.65 140.40 L606.10 139.84" fill="none" stroke="#d03ad0" stroke-width="0.7" stroke-linejoin="bevel"/>
<line x1="329.8" y1="140.40" x2="607.4" y2="140.40" stroke="#5a2a5a" stroke-width="0.6"/>
<rect x="331.8" y="194.1" width="3.2" height="1.2" fill="#c040c8"/>
<text x="337.10" y="196.15" font-size="4.1" fill="#666" font-weight="normal" text-anchor="start" >FPS</text>
<rect x="346.9" y="194.1" width="3.2" height="1.2" fill="#222"/>
<text x="352.20" y="196.15" font-size="4.1" fill="#666" font-weight="normal" text-anchor="start" >FPS Median</text>
<rect x="375.9" y="194.1" width="3.2" height="1.2" fill="#f0a050"/>
<text x="381.20" y="196.15" font-size="4.1" fill="#666" font-weight="normal" text-anchor="start" >60 FPS</text>
<rect x="312.4" y="204.8" width="304.7" height="110.20000000000002" rx="1.8" fill="#000" opacity="0.13" filter="url(#sh)"/>
<rect x="313" y="205" width="303.5" height="108.80000000000001" rx="1.5" fill="#fff"/>
<text x="472.00" y="212.60" font-size="4.98" fill="#333" font-weight="normal" text-anchor="middle" >Распределение частоты кадров</text>
<line x1="332.6" y1="286.30" x2="606.7" y2="286.30" stroke="#dcdcdc" stroke-width="0.6"/>
<text x="331.40" y="287.80" font-size="4.3" fill="#555" font-weight="normal" text-anchor="end" >0</text>
<line x1="332.6" y1="272.82" x2="606.7" y2="272.82" stroke="#dcdcdc" stroke-width="0.6"/>
<text x="331.40" y="274.32" font-size="4.3" fill="#555" font-weight="normal" text-anchor="end" >20</text>
<line x1="332.6" y1="259.34" x2="606.7" y2="259.34" stroke="#dcdcdc" stroke-width="0.6"/>
<text x="331.40" y="260.84" font-size="4.3" fill="#555" font-weight="normal" text-anchor="end" >40</text>
<line x1="332.6" y1="245.86" x2="606.7" y2="245.86" stroke="#dcdcdc" stroke-width="0.6"/>
<text x="331.40" y="247.36" font-size="4.3" fill="#555" font-weight="normal" text-anchor="end" >60</text>
<line x1="332.6" y1="232.38" x2="606.7" y2="232.38" stroke="#dcdcdc" stroke-width="0.6"/>
<text x="331.40" y="233.88" font-size="4.3" fill="#555" font-weight="normal" text-anchor="end" >80</text>
<line x1="332.6" y1="218.90" x2="606.7" y2="218.90" stroke="#dcdcdc" stroke-width="0.6"/>
<text x="331.40" y="220.40" font-size="4.3" fill="#555" font-weight="normal" text-anchor="end" >100</text>
<line x1="375.42" y1="212" x2="375.42" y2="293.6" stroke="#d2d2d2" stroke-width="0.5" stroke-dasharray="3.4 2.2"/>
<line x1="418.24" y1="212" x2="418.24" y2="293.6" stroke="#d2d2d2" stroke-width="0.5" stroke-dasharray="3.4 2.2"/>
<line x1="461.06" y1="212" x2="461.06" y2="293.6" stroke="#d2d2d2" stroke-width="0.5" stroke-dasharray="3.4 2.2"/>
<line x1="503.88" y1="212" x2="503.88" y2="293.6" stroke="#d2d2d2" stroke-width="0.5" stroke-dasharray="3.4 2.2"/>
<line x1="546.70" y1="212" x2="546.70" y2="293.6" stroke="#d2d2d2" stroke-width="0.5" stroke-dasharray="3.4 2.2"/>
<line x1="589.52" y1="212" x2="589.52" y2="293.6" stroke="#d2d2d2" stroke-width="0.5" stroke-dasharray="3.4 2.2"/>
<line x1="332.6" y1="212" x2="332.6" y2="293.6" stroke="#d0d0d0" stroke-width="0.6"/>
<text x="332.60" y="297.80" font-size="4.0" fill="#555" font-weight="normal" text-anchor="middle" >0</text>
<text x="375.42" y="297.80" font-size="4.0" fill="#555" font-weight="normal" text-anchor="middle" >5</text>
<text x="418.24" y="297.80" font-size="4.0" fill="#555" font-weight="normal" text-anchor="middle" >10</text>
<text x="461.06" y="297.80" font-size="4.0" fill="#555" font-weight="normal" text-anchor="middle" >15</text>
<text x="503.88" y="297.80" font-size="4.0" fill="#555" font-weight="normal" text-anchor="middle" >20</text>
<text x="546.70" y="297.80" font-size="4.0" fill="#555" font-weight="normal" text-anchor="middle" >25</text>
<text x="589.52" y="297.80" font-size="4.0" fill="#555" font-weight="normal" text-anchor="middle" >30</text>
<text x="465.00" y="301.60" font-size="4.2" fill="#555" font-weight="normal" text-anchor="middle" >Кадров в секунду</text>
<clipPath id="c2yt"><rect x="313" y="205.5" width="20" height="100"/></clipPath>
<g clip-path="url(#c2yt)">
<text x="0" y="0" transform="translate(323.4,286.5) rotate(-90)" font-size="4.75" fill="#444">% Время с определенным показателем FPS</text>
</g>
<path d="M332.60 286.30 L341.16 286.30 L349.73 286.30 L358.29 286.30 L366.86 286.30 L375.42 286.30 L383.98 286.30 L392.55 286.30 L401.11 286.30 L409.68 286.30 L418.24 286.30 L426.80 286.30 L435.37 286.30 L443.93 286.30 L452.50 286.30 L461.06 286.30 L469.62 286.30 L478.19 286.30 L486.75 286.30 L495.32 286.30 L503.88 286.30 L512.44 286.30 L521.01 286.30 L529.57 286.30 L538.14 286.23 L546.70 286.03 L555.26 285.69 L563.83 284.95 L572.39 283.20 L580.96 273.16 L589.52 251.25 L598.08 276.73 L606.65 286.30 L606.7 293.6 L332.6 293.6Z" fill="#d5f1f8"/>
<path d="M332.60 286.30 L341.16 286.30 L349.73 286.30 L358.29 286.30 L366.86 286.30 L375.42 286.30 L383.98 286.30 L392.55 286.30 L401.11 286.30 L409.68 286.30 L418.24 286.30 L426.80 286.30 L435.37 286.30 L443.93 286.30 L452.50 286.30 L461.06 286.30 L469.62 286.30 L478.19 286.30 L486.75 286.30 L495.32 286.30 L503.88 286.30 L512.44 286.30 L521.01 286.30 L529.57 286.30 L538.14 286.23 L546.70 286.03 L555.26 285.69 L563.83 284.95 L572.39 283.20 L580.96 273.16 L589.52 251.25 L598.08 276.73 L606.65 286.30" fill="none" stroke="#2d3a44" stroke-width="0.7"/>
<line x1="589.52" y1="218.90" x2="589.52" y2="286.30" stroke="#e8913a" stroke-width="0.8"/>
<circle cx="589.52" cy="218.90" r="1.5" fill="#e0f5fb" stroke="#8fd2e6" stroke-width="0.5"/>
<circle cx="589.52" cy="286.30" r="1.5" fill="#e0f5fb" stroke="#8fd2e6" stroke-width="0.5"/>
<rect x="334.2" y="306.29999999999995" width="3.2" height="1.2" fill="#2d3a44"/>
<text x="339.50" y="308.35" font-size="4.1" fill="#666" font-weight="normal" text-anchor="start" >FPS Distribution Around Median</text>
<rect x="400" y="306.3" width="3.3" height="1.2" fill="#222"/>
<rect x="406.9" y="306.29999999999995" width="3.2" height="1.2" fill="#e8913a"/>
<text x="412.20" y="308.35" font-size="4.1" fill="#666" font-weight="normal" text-anchor="start" >FPS Median</text>
<rect x="312.4" y="318.1" width="304.7" height="19.9" rx="1.8" fill="#000" opacity="0.13" filter="url(#sh)"/>
<rect x="313" y="318.3" width="303.5" height="18.5" rx="1.5" fill="#fff"/>
<text x="320.20" y="328.40" font-size="6.01" fill="#505050" font-weight="normal" text-anchor="start" >Значения в области среднего FPS обеспечивают наиболее комфортную игру.</text>
<rect x="310" y="496.5" width="310" height="20.5" fill="#000"/>
<rect x="335.3" y="503.7" width="1.3" height="1.3" fill="#2a2a2a"/>
<rect x="338.0" y="503.7" width="1.3" height="1.3" fill="#2a2a2a"/>
<rect x="340.7" y="503.7" width="1.3" height="1.3" fill="#2a2a2a"/>
<rect x="335.3" y="506.09999999999997" width="1.3" height="1.3" fill="#2a2a2a"/>
<rect x="338.0" y="506.09999999999997" width="1.3" height="1.3" fill="#2a2a2a"/>
<rect x="340.7" y="506.09999999999997" width="1.3" height="1.3" fill="#2a2a2a"/>
<rect x="335.3" y="508.5" width="1.3" height="1.3" fill="#2a2a2a"/>
<rect x="338.0" y="508.5" width="1.3" height="1.3" fill="#2a2a2a"/>
<rect x="340.7" y="508.5" width="1.3" height="1.3" fill="#2a2a2a"/>
<rect x="388" y="501.7" width="10.5" height="10.3" rx="2.5" fill="#f4f6fb"/>
<path d="M391.3 504 q0.8 -0.6 1.2 0.3 l0.3 1 q0 0.6 -0.6 0.8 q0.6 1.6 2 2.2 q0.3 -0.6 0.9 -0.5 l1 0.4 q0.6 0.5 0 1.2 q-1.2 1 -3 -0.3 q-2.2 -1.8 -1.8 -5.1z" fill="#1a56c8"/>
<rect x="407.2" y="501.7" width="10.6" height="10.3" rx="2.5" fill="#f4f6fb"/>
<ellipse cx="412.5" cy="506.3" rx="3.4" ry="2.4" fill="#1f5fd8"/>
<path d="M411.8 508.2 l0.8 1.8 l1.2 -2z" fill="#1f5fd8"/>
<rect x="426.8" y="501.7" width="10.3" height="10.3" rx="2.5" fill="#f4f4f4"/>
<circle cx="431.95" cy="506.85" r="3.6" fill="#dd4433"/>
<path d="M431.95 506.85 L428.84999999999997 508.65000000000003 A3.6 3.6 0 0 0 433.15 510.25z" fill="#2ea353"/>
<path d="M431.95 506.85 L433.15 510.25 A3.6 3.6 0 0 0 435.55 506.65000000000003 L431.95 503.25z" fill="#f5c12e"/>
<circle cx="431.95" cy="506.85" r="1.6" fill="#fff"/><circle cx="431.95" cy="506.85" r="1.2" fill="#3b78e7"/>
<rect x="446" y="501.7" width="10.5" height="10.3" rx="2.5" fill="#f6f6f6"/>
<rect x="448.2" y="504.3" width="6.2" height="4.6" rx="1.2" fill="#e62117"/>
<path d="M450.6 505.5 l2 1.1 l-2 1.1z" fill="#fff"/>
<circle cx="455.8" cy="501.9" r="0.9" fill="#e94a3f"/>
<rect x="465.6" y="501.7" width="10.4" height="10.3" rx="2.5" fill="#c4c4c4"/>
<circle cx="470.8" cy="506.85" r="3.3" fill="none" stroke="#555" stroke-width="0.7"/>
<circle cx="470.8" cy="506.85" r="1.8" fill="none" stroke="#666" stroke-width="0.6"/>
<rect x="484.8" y="501.7" width="10.3" height="10.3" rx="2.5" fill="#f2f2f2"/>
<circle cx="489.95" cy="506.85" r="3.4" fill="#2c2a44"/>
<circle cx="489.95" cy="506.85" r="1.8" fill="#4a3f6a"/>
<rect x="512" y="501.7" width="10.5" height="10.3" rx="2.5" fill="#f6f6f6"/>
<rect x="514.2" y="504.3" width="6.2" height="4.6" rx="1.2" fill="#e62117"/>
<path d="M516.6 505.5 l2 1.1 l-2 1.1z" fill="#fff"/>
<rect x="531.4" y="501.7" width="10.3" height="10.3" rx="2.5" fill="#2b4350"/>
<line x1="536.55" y1="506.85" x2="539.49" y2="508.55" stroke="#dff0f6" stroke-width="0.85"/>
<circle cx="538.76" cy="508.12" r="0.75" fill="#dff0f6"/>
<line x1="536.55" y1="506.85" x2="536.55" y2="510.25" stroke="#dff0f6" stroke-width="0.85"/>
<circle cx="536.55" cy="509.40" r="0.75" fill="#dff0f6"/>
<line x1="536.55" y1="506.85" x2="533.61" y2="508.55" stroke="#dff0f6" stroke-width="0.85"/>
<circle cx="534.34" cy="508.12" r="0.75" fill="#dff0f6"/>
<line x1="536.55" y1="506.85" x2="533.61" y2="505.15" stroke="#dff0f6" stroke-width="0.85"/>
<circle cx="534.34" cy="505.58" r="0.75" fill="#dff0f6"/>
<line x1="536.55" y1="506.85" x2="536.55" y2="503.45" stroke="#dff0f6" stroke-width="0.85"/>
<circle cx="536.55" cy="504.30" r="0.75" fill="#dff0f6"/>
<line x1="536.55" y1="506.85" x2="539.49" y2="505.15" stroke="#dff0f6" stroke-width="0.85"/>
<circle cx="538.76" cy="505.58" r="0.75" fill="#dff0f6"/>
<rect x="503" y="503" width="0.7" height="7.5" fill="#5a4a3a"/>
<rect x="425.2" y="513.8" width="79.6" height="1.1" rx="0.5" fill="#e8e8e8"/>
<g clip-path="url(#clip620)">
<rect x="620" y="0" width="310" height="46.3" fill="#ff7a00"/>
<rect x="631" y="10.2" width="8" height="1.2" fill="#ffdcb8"/>
<rect x="631" y="12.4" width="8" height="1.2" fill="#ffdcb8"/>
<rect x="631" y="14.6" width="8" height="1.2" fill="#ffdcb8"/>
<text x="653.8" y="16.2" font-size="7.5" fill="#fff0e2" stroke="#fff0e2" stroke-width="0.22" textLength="39.9" lengthAdjust="spacingAndGlyphs">GameBench</text>
<rect x="740.8" y="27.5" width="67.7" height="19" rx="1.5" fill="#e06a00" opacity="0.85"/>
<text x="605.30" y="39.7" font-size="6.1" fill="#ffc690" font-weight="bold" textLength="52.2" lengthAdjust="spacing">ОБЩАЯ ОЦЕНКА</text>
<text x="671.40" y="39.7" font-size="6.1" fill="#ffc690" font-weight="bold" textLength="63.2" lengthAdjust="spacing">КАДРЫ В СЕКУНДУ</text>
<text x="761.00" y="39.7" font-size="6.1" fill="#fff2e4" font-weight="bold" textLength="28.7" lengthAdjust="spacing">БАТАРЕЯ</text>
<rect x="760.7" y="45.7" width="29.5" height="1.3" fill="#fff5ec"/>
<text x="828.70" y="39.7" font-size="6.1" fill="#ffc690" font-weight="bold" textLength="27.3" lengthAdjust="spacing">ПАМЯТЬ</text>
<text x="903.10" y="39.7" font-size="6.1" fill="#ffc690" font-weight="bold" textLength="13" lengthAdjust="spacing">CPU</text>
</g>
<rect x="622.4" y="50.3" width="304.59999999999997" height="43.6" rx="1.8" fill="#000" opacity="0.13" filter="url(#sh)"/>
<rect x="623" y="50.5" width="303.4" height="42.2" rx="1.5" fill="#fff"/>
<rect x="666.6" y="61.2" width="4.8" height="2.8" rx="1" fill="#fff" stroke="#777" stroke-width="0.7"/>
<rect x="664.6" y="63.6" width="8.9" height="15" rx="1.2" fill="#fff" stroke="#6d6d6d" stroke-width="0.9"/>
<rect x="665.3" y="67.4" width="7.5" height="9.6" fill="#a9d9e8"/>
<rect x="665.3" y="70.3" width="7.5" height="0.5" fill="#86c0d2"/><rect x="665.3" y="73.6" width="7.5" height="0.5" fill="#86c0d2"/>
<text x="716.40" y="63.00" font-size="7.04" fill="#3a3f47" font-weight="bold" text-anchor="start" >Расход батареи: 11% в час</text>
<text x="716.40" y="73.40" font-size="7.43" fill="#555" font-weight="normal" text-anchor="start" >Технология: Li-ion</text>
<text x="716.40" y="83.10" font-size="7.45" fill="#555" font-weight="normal" text-anchor="start" >Напряжение: 3951 mV</text>
<rect x="622.4" y="99.39999999999999" width="304.59999999999997" height="110.20000000000002" rx="1.8" fill="#000" opacity="0.13" filter="url(#sh)"/>
<rect x="623" y="99.6" width="303.4" height="108.80000000000001" rx="1.5" fill="#fff"/>
<text x="781.60" y="109.90" font-size="4.91" fill="#333" font-weight="normal" text-anchor="middle" >Скорость расхода заряда батареи</text>
<line x1="642.6" y1="108.40" x2="917" y2="108.40" stroke="#dcdcdc" stroke-width="0.6"/>
<text x="641.40" y="109.90" font-size="4.3" fill="#555" font-weight="normal" text-anchor="end" >62,4</text>
<line x1="642.6" y1="122.05" x2="917" y2="122.05" stroke="#dcdcdc" stroke-width="0.6"/>
<text x="641.40" y="123.55" font-size="4.3" fill="#555" font-weight="normal" text-anchor="end" >61,6</text>
<line x1="642.6" y1="135.70" x2="917" y2="135.70" stroke="#dcdcdc" stroke-width="0.6"/>
<text x="641.40" y="137.20" font-size="4.3" fill="#555" font-weight="normal" text-anchor="end" >60,8</text>
<line x1="642.6" y1="149.35" x2="917" y2="149.35" stroke="#dcdcdc" stroke-width="0.6"/>
<text x="641.40" y="150.85" font-size="4.3" fill="#555" font-weight="normal" text-anchor="end" >60,0</text>
<line x1="642.6" y1="163.00" x2="917" y2="163.00" stroke="#dcdcdc" stroke-width="0.6"/>
<text x="641.40" y="164.50" font-size="4.3" fill="#555" font-weight="normal" text-anchor="end" >59,2</text>
<line x1="642.6" y1="176.65" x2="917" y2="176.65" stroke="#dcdcdc" stroke-width="0.6"/>
<text x="641.40" y="178.15" font-size="4.3" fill="#555" font-weight="normal" text-anchor="end" >58,4</text>
<line x1="642.6" y1="190.30" x2="917" y2="190.30" stroke="#dcdcdc" stroke-width="0.6"/>
<text x="641.40" y="191.80" font-size="4.3" fill="#555" font-weight="normal" text-anchor="end" >57,6</text>
<line x1="683.70" y1="103" x2="683.70" y2="190.3" stroke="#d2d2d2" stroke-width="0.5" stroke-dasharray="3.4 2.2"/>
<line x1="724.80" y1="103" x2="724.80" y2="190.3" stroke="#d2d2d2" stroke-width="0.5" stroke-dasharray="3.4 2.2"/>
<line x1="765.90" y1="103" x2="765.90" y2="190.3" stroke="#d2d2d2" stroke-width="0.5" stroke-dasharray="3.4 2.2"/>
<line x1="807.00" y1="103" x2="807.00" y2="190.3" stroke="#d2d2d2" stroke-width="0.5" stroke-dasharray="3.4 2.2"/>
<line x1="848.10" y1="103" x2="848.10" y2="190.3" stroke="#d2d2d2" stroke-width="0.5" stroke-dasharray="3.4 2.2"/>
<line x1="889.20" y1="103" x2="889.20" y2="190.3" stroke="#d2d2d2" stroke-width="0.5" stroke-dasharray="3.4 2.2"/>
<line x1="642.6" y1="103" x2="642.6" y2="190.3" stroke="#d0d0d0" stroke-width="0.6"/>
<text x="642.60" y="194.30" font-size="4.1" fill="#555" font-weight="normal" text-anchor="middle" >00:00</text>
<text x="683.70" y="194.30" font-size="4.1" fill="#555" font-weight="normal" text-anchor="middle" >03:20</text>
<text x="724.80" y="194.30" font-size="4.1" fill="#555" font-weight="normal" text-anchor="middle" >06:40</text>
<text x="765.90" y="194.30" font-size="4.1" fill="#555" font-weight="normal" text-anchor="middle" >10:00</text>
<text x="807.00" y="194.30" font-size="4.1" fill="#555" font-weight="normal" text-anchor="middle" >13:20</text>
<text x="848.10" y="194.30" font-size="4.1" fill="#555" font-weight="normal" text-anchor="middle" >16:40</text>
<text x="889.20" y="194.30" font-size="4.1" fill="#555" font-weight="normal" text-anchor="middle" >20:00</text>
<text x="775.00" y="198.30" font-size="4.22" fill="#555" font-weight="normal" text-anchor="middle" >Time in Minutes</text>
<text x="0" y="0" transform="translate(633.60,142.60) rotate(-90)" font-size="5.0" fill="#444" text-anchor="middle">Уровень батареи(%)</text>
<path d="M642.6 115.22 L679.9 115.22 L685.8 132.28 L759.9 132.28 L766.6 149.34 L827.3 149.34 L833.9 183.46 L917 183.46" fill="none" stroke="#bf5cc9" stroke-width="0.75"/>
<rect x="645" y="202.9" width="3.2" height="1.2" fill="#c466cc"/>
<text x="650.30" y="204.95" font-size="4.1" fill="#666" font-weight="normal" text-anchor="start" >Battery Level</text>
<rect x="622.4" y="215.8" width="304.59999999999997" height="109.00000000000003" rx="1.8" fill="#000" opacity="0.13" filter="url(#sh)"/>
<rect x="623" y="216" width="303.4" height="107.60000000000002" rx="1.5" fill="#fff"/>
<text x="782.00" y="225.30" font-size="4.9" fill="#333" font-weight="normal" text-anchor="middle" >Температура батареи</text>
<line x1="642.2" y1="231.00" x2="917.2" y2="231.00" stroke="#dcdcdc" stroke-width="0.6"/>
<text x="641.00" y="232.50" font-size="4.3" fill="#555" font-weight="normal" text-anchor="end" >34,0</text>
<line x1="642.2" y1="244.56" x2="917.2" y2="244.56" stroke="#dcdcdc" stroke-width="0.6"/>
<text x="641.00" y="246.06" font-size="4.3" fill="#555" font-weight="normal" text-anchor="end" >33,6</text>
<line x1="642.2" y1="258.12" x2="917.2" y2="258.12" stroke="#dcdcdc" stroke-width="0.6"/>
<text x="641.00" y="259.62" font-size="4.3" fill="#555" font-weight="normal" text-anchor="end" >33,2</text>
<line x1="642.2" y1="271.68" x2="917.2" y2="271.68" stroke="#dcdcdc" stroke-width="0.6"/>
<text x="641.00" y="273.18" font-size="4.3" fill="#555" font-weight="normal" text-anchor="end" >32,8</text>
<line x1="642.2" y1="285.24" x2="917.2" y2="285.24" stroke="#dcdcdc" stroke-width="0.6"/>
<text x="641.00" y="286.74" font-size="4.3" fill="#555" font-weight="normal" text-anchor="end" >32,4</text>
<line x1="642.2" y1="298.80" x2="917.2" y2="298.80" stroke="#dcdcdc" stroke-width="0.6"/>
<text x="641.00" y="300.30" font-size="4.3" fill="#555" font-weight="normal" text-anchor="end" >32,0</text>
<line x1="683.30" y1="225" x2="683.30" y2="305.2" stroke="#d2d2d2" stroke-width="0.5" stroke-dasharray="3.4 2.2"/>
<line x1="724.40" y1="225" x2="724.40" y2="305.2" stroke="#d2d2d2" stroke-width="0.5" stroke-dasharray="3.4 2.2"/>
<line x1="765.50" y1="225" x2="765.50" y2="305.2" stroke="#d2d2d2" stroke-width="0.5" stroke-dasharray="3.4 2.2"/>
<line x1="806.60" y1="225" x2="806.60" y2="305.2" stroke="#d2d2d2" stroke-width="0.5" stroke-dasharray="3.4 2.2"/>
<line x1="847.70" y1="225" x2="847.70" y2="305.2" stroke="#d2d2d2" stroke-width="0.5" stroke-dasharray="3.4 2.2"/>
<line x1="888.80" y1="225" x2="888.80" y2="305.2" stroke="#d2d2d2" stroke-width="0.5" stroke-dasharray="3.4 2.2"/>
<line x1="642.2" y1="225" x2="642.2" y2="305.2" stroke="#d0d0d0" stroke-width="0.6"/>
<line x1="642.2" y1="305.20" x2="917.2" y2="305.20" stroke="#d0d0d0" stroke-width="0.6"/>
<text x="642.20" y="309.90" font-size="4.1" fill="#555" font-weight="normal" text-anchor="middle" >00:00</text>
<text x="683.30" y="309.90" font-size="4.1" fill="#555" font-weight="normal" text-anchor="middle" >03:20</text>
<text x="724.40" y="309.90" font-size="4.1" fill="#555" font-weight="normal" text-anchor="middle" >06:40</text>
<text x="765.50" y="309.90" font-size="4.1" fill="#555" font-weight="normal" text-anchor="middle" >10:00</text>
<text x="806.60" y="309.90" font-size="4.1" fill="#555" font-weight="normal" text-anchor="middle" >13:20</text>
<text x="847.70" y="309.90" font-size="4.1" fill="#555" font-weight="normal" text-anchor="middle" >16:40</text>
<text x="888.80" y="309.90" font-size="4.1" fill="#555" font-weight="normal" text-anchor="middle" >20:00</text>
<text x="775.50" y="313.80" font-size="4.22" fill="#555" font-weight="normal" text-anchor="middle" >Time in Minutes</text>
<text x="0" y="0" transform="translate(633.40,256.70) rotate(-90)" font-size="4.55" fill="#444" text-anchor="middle">Температура батареи(°C)</text>
<path d="M642.2 298.80 L716.8 298.80 L722.8 264.90 L852.1 264.90 L858.3 231.00 L864.5 231.00 L870.7 264.90 L876.8 231.00 L917.2 231.00" fill="none" stroke="#4646b0" stroke-width="0.75"/>
<rect x="645.4" y="318.4" width="3.2" height="1.2" fill="#3a3aa8"/>
<text x="650.70" y="320.45" font-size="4.1" fill="#666" font-weight="normal" text-anchor="start" >Battery Temperature</text>
<rect x="620" y="496.5" width="310" height="20.5" fill="#000"/>
<rect x="645.3" y="503.7" width="1.3" height="1.3" fill="#2a2a2a"/>
<rect x="648.0" y="503.7" width="1.3" height="1.3" fill="#2a2a2a"/>
<rect x="650.6999999999999" y="503.7" width="1.3" height="1.3" fill="#2a2a2a"/>
<rect x="645.3" y="506.09999999999997" width="1.3" height="1.3" fill="#2a2a2a"/>
<rect x="648.0" y="506.09999999999997" width="1.3" height="1.3" fill="#2a2a2a"/>
<rect x="650.6999999999999" y="506.09999999999997" width="1.3" height="1.3" fill="#2a2a2a"/>
<rect x="645.3" y="508.5" width="1.3" height="1.3" fill="#2a2a2a"/>
<rect x="648.0" y="508.5" width="1.3" height="1.3" fill="#2a2a2a"/>
<rect x="650.6999999999999" y="508.5" width="1.3" height="1.3" fill="#2a2a2a"/>
<rect x="698" y="501.7" width="10.5" height="10.3" rx="2.5" fill="#f4f6fb"/>
<path d="M701.3 504 q0.8 -0.6 1.2 0.3 l0.3 1 q0 0.6 -0.6 0.8 q0.6 1.6 2 2.2 q0.3 -0.6 0.9 -0.5 l1 0.4 q0.6 0.5 0 1.2 q-1.2 1 -3 -0.3 q-2.2 -1.8 -1.8 -5.1z" fill="#1a56c8"/>
<rect x="717.2" y="501.7" width="10.6" height="10.3" rx="2.5" fill="#f4f6fb"/>
<ellipse cx="722.5" cy="506.3" rx="3.4" ry="2.4" fill="#1f5fd8"/>
<path d="M721.8000000000001 508.2 l0.8 1.8 l1.2 -2z" fill="#1f5fd8"/>
<rect x="736.8" y="501.7" width="10.3" height="10.3" rx="2.5" fill="#f4f4f4"/>
<circle cx="741.9499999999999" cy="506.85" r="3.6" fill="#dd4433"/>
<path d="M741.9499999999999 506.85 L738.8499999999999 508.65000000000003 A3.6 3.6 0 0 0 743.15 510.25z" fill="#2ea353"/>
<path d="M741.9499999999999 506.85 L743.15 510.25 A3.6 3.6 0 0 0 745.55 506.65000000000003 L741.9499999999999 503.25z" fill="#f5c12e"/>
<circle cx="741.9499999999999" cy="506.85" r="1.6" fill="#fff"/><circle cx="741.9499999999999" cy="506.85" r="1.2" fill="#3b78e7"/>
<rect x="756" y="501.7" width="10.5" height="10.3" rx="2.5" fill="#f6f6f6"/>
<rect x="758.2" y="504.3" width="6.2" height="4.6" rx="1.2" fill="#e62117"/>
<path d="M760.6 505.5 l2 1.1 l-2 1.1z" fill="#fff"/>
<circle cx="765.8" cy="501.9" r="0.9" fill="#e94a3f"/>
<rect x="775.6" y="501.7" width="10.4" height="10.3" rx="2.5" fill="#c4c4c4"/>
<circle cx="780.8000000000001" cy="506.85" r="3.3" fill="none" stroke="#555" stroke-width="0.7"/>
<circle cx="780.8000000000001" cy="506.85" r="1.8" fill="none" stroke="#666" stroke-width="0.6"/>
<rect x="794.8" y="501.7" width="10.3" height="10.3" rx="2.5" fill="#f2f2f2"/>
<circle cx="799.9499999999999" cy="506.85" r="3.4" fill="#2c2a44"/>
<circle cx="799.9499999999999" cy="506.85" r="1.8" fill="#4a3f6a"/>
<rect x="822" y="501.7" width="10.5" height="10.3" rx="2.5" fill="#f6f6f6"/>
<rect x="824.2" y="504.3" width="6.2" height="4.6" rx="1.2" fill="#e62117"/>
<path d="M826.6 505.5 l2 1.1 l-2 1.1z" fill="#fff"/>
<rect x="841.4" y="501.7" width="10.3" height="10.3" rx="2.5" fill="#2b4350"/>
<line x1="846.55" y1="506.85" x2="849.49" y2="508.55" stroke="#dff0f6" stroke-width="0.85"/>
<circle cx="848.76" cy="508.12" r="0.75" fill="#dff0f6"/>
<line x1="846.55" y1="506.85" x2="846.55" y2="510.25" stroke="#dff0f6" stroke-width="0.85"/>
<circle cx="846.55" cy="509.40" r="0.75" fill="#dff0f6"/>
<line x1="846.55" y1="506.85" x2="843.61" y2="508.55" stroke="#dff0f6" stroke-width="0.85"/>
<circle cx="844.34" cy="508.12" r="0.75" fill="#dff0f6"/>
<line x1="846.55" y1="506.85" x2="843.61" y2="505.15" stroke="#dff0f6" stroke-width="0.85"/>
<circle cx="844.34" cy="505.58" r="0.75" fill="#dff0f6"/>
<line x1="846.55" y1="506.85" x2="846.55" y2="503.45" stroke="#dff0f6" stroke-width="0.85"/>
<circle cx="846.55" cy="504.30" r="0.75" fill="#dff0f6"/>
<line x1="846.55" y1="506.85" x2="849.49" y2="505.15" stroke="#dff0f6" stroke-width="0.85"/>
<circle cx="848.76" cy="505.58" r="0.75" fill="#dff0f6"/>
<rect x="813" y="503" width="0.7" height="7.5" fill="#5a4a3a"/>
<rect x="735.2" y="513.8" width="79.6" height="1.1" rx="0.5" fill="#e8e8e8"/>
</svg></body></html>
